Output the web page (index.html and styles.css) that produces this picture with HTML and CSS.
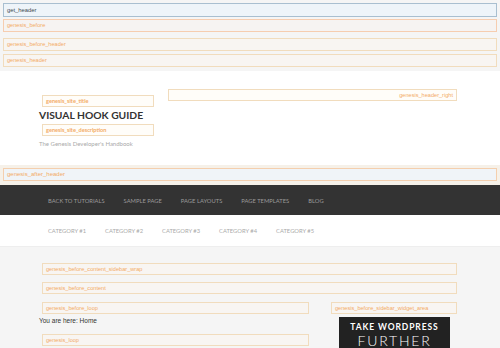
FILE: index.html
```html
<!DOCTYPE html>
<html lang="en">
<head>
  <meta charset="UTF-8">
  <title>Visual Hook Guide</title>
  <link rel="stylesheet" href="styles.css">
</head>
<body>
  <div class="top-hooks">
    <div class="hook hook-main">get_header</div>
    <div class="hook hook-peach hook-before">genesis_before</div>
    <div class="hook hook-before-header">genesis_before_header</div>
    <div class="hook hook-header">genesis_header</div>
  </div>

  <header class="site-header">
    <div class="title-area">
      <div class="hook hook-bold">genesis_site_title</div>
      <p class="site-title">VISUAL HOOK GUIDE</p>
      <div class="hook hook-bold">genesis_site_description</div>
      <p class="site-description">The Genesis Developer's Handbook</p>
    </div>
    <div class="header-right">
      <div class="hook hook-right">genesis_header_right</div>
    </div>
  </header>

  <div class="after-header-wrap">
    <div class="hook hook-blue">genesis_after_header</div>
  </div>

  <nav class="nav-primary">
    <a>BACK TO TUTORIALS</a>
    <a>SAMPLE PAGE</a>
    <a>PAGE LAYOUTS</a>
    <a>PAGE TEMPLATES</a>
    <a>BLOG</a>
  </nav>

  <nav class="nav-secondary">
    <a>CATEGORY #1</a>
    <a>CATEGORY #2</a>
    <a>CATEGORY #3</a>
    <a>CATEGORY #4</a>
    <a>CATEGORY #5</a>
  </nav>

  <div class="site-inner">
    <div class="hook">genesis_before_content_sidebar_wrap</div>
    <div class="hook">genesis_before_content</div>
    <div class="content-sidebar">
      <main class="content">
        <div class="hook">genesis_before_loop</div>
        <p class="breadcrumb">You are here: Home</p>
        <div class="hook">genesis_loop</div>
      </main>
      <aside class="sidebar">
        <div class="hook">genesis_before_sidebar_widget_area</div>
        <div class="promo">
          <span class="promo-top">TAKE WORDPRESS</span>
          <span class="promo-big">FURTHER</span>
        </div>
      </aside>
    </div>
  </div>
</body>
</html>
```

FILE: styles.css
```css
/* base */
body {
  margin: 0;
  background: #f5f5f5;
  font-family: 'Liberation Sans', Arial, sans-serif;
  overflow: hidden;
}

p { margin: 0; }

/* hook boxes */
.hook {
  box-sizing: border-box;
  height: 12px;
  padding: 0 3px;
  background: #f8f5f2;
  border: 1px solid #f1dcbd;
  color: #f3ab66;
  font-size: 5.6px;
  line-height: 10px;
  white-space: nowrap;
}

.hook-bold {
  font-family: 'Lato', sans-serif;
  font-weight: bold;
  background: #fffdf9;
}

.hook-right {
  text-align: right;
  background: #fffdf9;
}

.hook-main {
  height: 14px;
  line-height: 12px;
  background: #eef4f9;
  border-color: #a9bfd0;
  color: #3d4750;
  font-size: 5.8px;
}

.hook-peach {
  border-color: #f6cdb0;
  background: #f6f3f2;
}

.hook-blue {
  background: #f0f4f8;
  border-color: #f4cfae;
}

/* top hooks */
.top-hooks {
  padding: 3px 3px 4px;
}

.hook-before { margin-top: 2px; height: 13px; }
.hook-before-header { margin-top: 6px; height: 13px; }
.hook-header { margin-top: 3px; height: 13px; }

/* header */
.site-header {
  display: flex;
  background: #fff;
  height: 94px;
  padding: 0 39px 0 39px;
  box-sizing: border-box;
}

.title-area {
  width: 115px;
  padding-top: 24px;
}

.title-area .hook { margin-left: 3px; width: 112px; }

.site-title {
  font-family: 'Lato', sans-serif;
  font-weight: bold;
  font-size: 10.3px;
  color: #333;
  line-height: 17px;
  white-space: nowrap;
}

.site-description {
  font-family: 'Lato', sans-serif;
  font-size: 6px;
  color: #aaa;
  margin-top: 4px;
  white-space: nowrap;
}

.header-right {
  flex: 1;
  padding: 18px 4px 0 14px;
}

/* after header */
.after-header-wrap {
  background: #f6f1e9;
  padding: 3px 3px 4px;
}

.hook-blue { height: 13px; line-height: 11px; font-size: 6px; }

/* navs */
.nav-primary, .nav-secondary {
  display: flex;
  align-items: center;
  padding-left: 48px;
  font-family: 'Lato', sans-serif;
  font-size: 5.8px;
}

.nav-primary {
  background: #333;
  height: 30px;
  gap: 19px;
  color: #9a9a9a;
}

.nav-secondary {
  background: #fff;
  height: 31px;
  gap: 19px;
  color: #aaa;
  border-bottom: 1px solid #eee;
}

.nav-primary a, .nav-secondary a { white-space: nowrap; }

/* content */
.site-inner {
  padding: 16px 43px 0 42px;
}

.site-inner > .hook + .hook { margin-top: 7px; }

.content-sidebar {
  display: flex;
  gap: 22px;
  margin-top: 8px;
}

.content { width: 267px; }
.sidebar { flex: 1; }

.breadcrumb {
  font-size: 6.5px;
  color: #333;
  margin: 2px 0 8px -3px;
  line-height: 10px;
}

.promo {
  margin: 3px 7px 0 8px;
  height: 40px;
  background: #222;
  color: #fff;
  display: flex;
  flex-direction: column;
  align-items: center;
  padding-top: 5px;
  box-sizing: border-box;
}

.promo-top {
  font-family: 'Lato', sans-serif;
  font-weight: bold;
  font-size: 8.5px;
  letter-spacing: 0.9px;
  line-height: 11px;
}

.promo-big {
  font-family: 'Lato', sans-serif;
  font-weight: 300;
  font-size: 14px;
  letter-spacing: 1.8px;
  line-height: 15px;
}
```
